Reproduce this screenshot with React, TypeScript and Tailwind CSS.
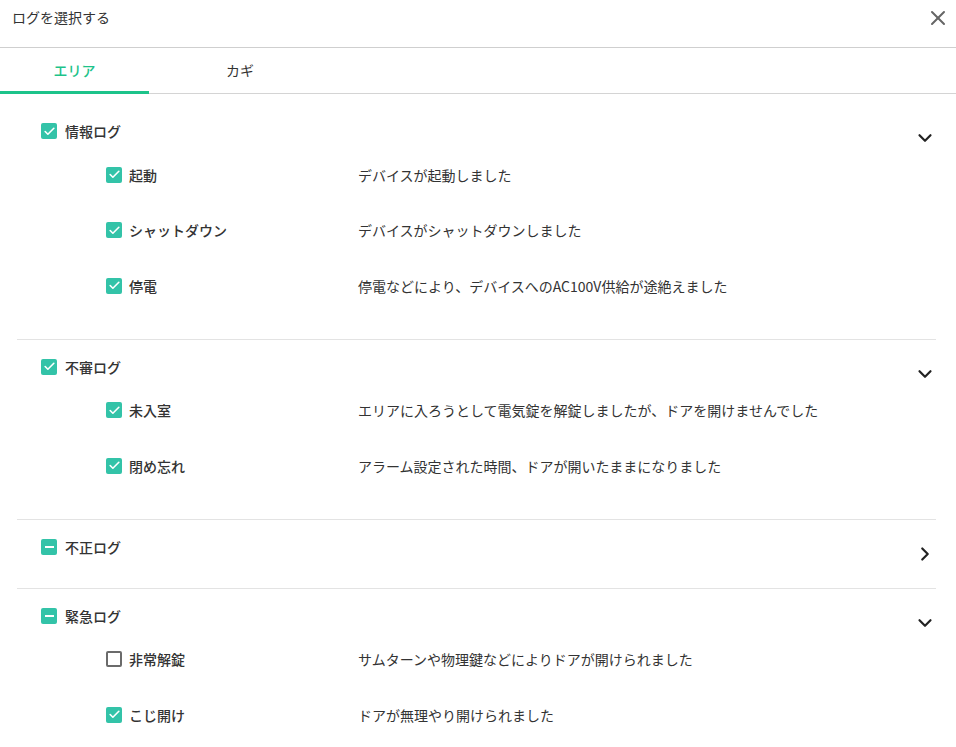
import { X, ChevronDown, ChevronRight, Check } from 'lucide-react';

type State = 'checked' | 'unchecked' | 'mixed';

interface LogItem {
  label: string;
  desc: string;
  checked: boolean;
}

interface LogGroup {
  label: string;
  state: State;
  open: boolean;
  items: LogItem[];
}

const groups: LogGroup[] = [
  {
    label: '情報ログ',
    state: 'checked',
    open: true,
    items: [
      { label: '起動', desc: 'デバイスが起動しました', checked: true },
      { label: 'シャットダウン', desc: 'デバイスがシャットダウンしました', checked: true },
      { label: '停電', desc: '停電などにより、デバイスへのAC100V供給が途絶えました', checked: true },
    ],
  },
  {
    label: '不審ログ',
    state: 'checked',
    open: true,
    items: [
      { label: '未入室', desc: 'エリアに入ろうとして電気錠を解錠しましたが、ドアを開けませんでした', checked: true },
      { label: '閉め忘れ', desc: 'アラーム設定された時間、ドアが開いたままになりました', checked: true },
    ],
  },
  { label: '不正ログ', state: 'mixed', open: false, items: [] },
  {
    label: '緊急ログ',
    state: 'mixed',
    open: true,
    items: [
      { label: '非常解錠', desc: 'サムターンや物理鍵などによりドアが開けられました', checked: false },
      { label: 'こじ開け', desc: 'ドアが無理やり開けられました', checked: true },
    ],
  },
];

function Box({ state }: { state: State }) {
  if (state === 'unchecked') {
    return <span className="block w-4 h-4 shrink-0 rounded-[2px] border-2 border-[#6b6b6b] bg-white" />;
  }
  return (
    <span className="flex items-center justify-center w-4 h-4 shrink-0 rounded-[2px] bg-[#33c3a8]">
      {state === 'checked' ? (
        <Check size={13} strokeWidth={3} className="text-white" />
      ) : (
        <span className="block w-[9px] h-[2px] bg-white" />
      )}
    </span>
  );
}

export default function App() {
  return (
    <div
      className="w-[956px] h-[747px] overflow-hidden bg-white text-[#333] text-sm"
      style={{ fontFamily: '"Noto Sans CJK JP", "Noto Sans", sans-serif' }}
    >
      {/* Header */}
      <div className="h-[48px] flex items-start justify-between pl-3 pr-[6px] pt-[7px] border-b border-[#cfcfcf]">
        <span className="leading-5">ログを選択する</span>
        <X size={24} strokeWidth={2} className="text-[#666] -mt-[1px]" />
      </div>

      {/* Tabs */}
      <div className="h-[46px] flex border-b border-[#d4d4d4]">
        <div className="w-[149px] flex items-center justify-center border-b-[3px] border-[#1dc38a] text-[#1dc38a] font-medium -mb-[1px] pt-[1px]">
          エリア
        </div>
        <div className="w-[182px] flex items-center justify-center pb-[2px]">カギ</div>
      </div>

      {/* Groups */}
      <div className="pt-[10px]">
        {groups.map(g => (
          <div key={g.label} className="ml-[17px] mr-[20px] border-b border-[#e3e3e3] pt-[17px] pb-[25px]">
            <div className="h-5 flex items-center justify-between pl-[24px]">
              <div className="flex items-center gap-2">
                <Box state={g.state} />
                <span className="font-medium leading-5">{g.label}</span>
              </div>
              {g.open ? (
                <ChevronDown size={22} strokeWidth={2.4} className="text-[#222] translate-y-[7px]" />
              ) : (
                <ChevronRight size={22} strokeWidth={2.4} className="text-[#222] translate-y-[7px]" />
              )}
            </div>
            <div className="mt-[6px]">
              {g.items.map(it => (
                <div key={it.label} className="h-[55.5px] flex items-center pl-[89px]">
                  <div className="w-[252px] flex items-center gap-[7px]">
                    <Box state={it.checked ? 'checked' : 'unchecked'} />
                    <span className="font-medium">{it.label}</span>
                  </div>
                  <span>{it.desc}</span>
                </div>
              ))}
            </div>
          </div>
        ))}
      </div>
    </div>
  );
}
